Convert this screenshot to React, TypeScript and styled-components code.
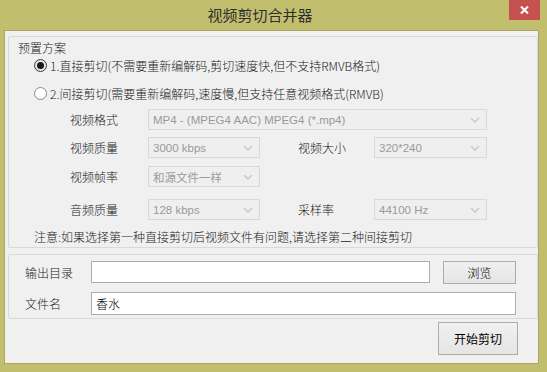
import React from "react";
import styled, { createGlobalStyle } from "styled-components";

const GlobalStyle = createGlobalStyle`
  html, body {
    margin: 0;
    padding: 0;
    background: #c1bf6e;
  }
  body {
    font-family: "Noto Sans", "Noto Sans CJK SC", sans-serif;
    font-size: 12px;
    color: #1a1a1a;
  }
`;

const Frame = styled.div`
  width: 547px;
  height: 372px;
  background: #c1bf6e;
  display: flex;
  flex-direction: column;
`;

const TitleBar = styled.div`
  height: 30px;
  display: flex;
  align-items: flex-start;
`;

const Title = styled.div`
  flex: 1;
  height: 29px;
  padding-left: 11px;
  display: flex;
  align-items: center;
  justify-content: center;
  font-family: "Noto Sans CJK SC", sans-serif;
  font-size: 15px;
  color: #2e2e2e;
`;

const CloseButton = styled.div`
  width: 31px;
  height: 20px;
  margin-right: 7px;
  background: #c75050;
  display: flex;
  align-items: center;
  justify-content: center;
`;

const Client = styled.div`
  box-sizing: border-box;
  width: 535px;
  height: 334px;
  margin-left: 4px;
  background: #f0f0f0;
  border: 1px solid #a9a763;
  padding: 5px 0 0 3px;
  display: flex;
  flex-direction: column;
`;

const GroupBox = styled.div<{ $pb: number; $mt?: number }>`
  box-sizing: border-box;
  width: 530px;
  margin-top: ${(p) => p.$mt ?? 0}px;
  border: 1px solid #d9d9d9;
  border-radius: 2px;
  padding-bottom: ${(p) => p.$pb}px;
  display: flex;
  flex-direction: column;
`;

const Row = styled.div<{ $h: number; $mt?: number; $pl: number }>`
  height: ${(p) => p.$h}px;
  margin-top: ${(p) => p.$mt ?? 0}px;
  padding-left: ${(p) => p.$pl}px;
  display: flex;
  align-items: center;
  font-family: "Noto Sans CJK SC", sans-serif;
  font-weight: 300;
  font-size: 12px;
  white-space: nowrap;
`;

const RadioCircle = styled.span<{ $on?: boolean }>`
  box-sizing: border-box;
  width: 13px;
  height: 13px;
  border-radius: 50%;
  border: 1px solid ${(p) => (p.$on ? "#3c3c3c" : "#8a8a8a")};
  background: ${(p) => (p.$on ? "#e6e6e6" : "#ffffff")};
  display: flex;
  align-items: center;
  justify-content: center;
  margin-right: 3px;
  flex-shrink: 0;

  &::after {
    content: "";
    width: 7px;
    height: 7px;
    border-radius: 50%;
    background: #1a1a1a;
    display: ${(p) => (p.$on ? "block" : "none")};
  }
`;

const Label = styled.span<{ $w: number }>`
  width: ${(p) => p.$w}px;
  flex-shrink: 0;
`;

const Select = styled.div<{ $w: number }>`
  box-sizing: border-box;
  width: ${(p) => p.$w}px;
  height: 21px;
  border: 1px solid #d9d9d9;
  background: #efefef;
  display: flex;
  align-items: center;
  justify-content: space-between;
  padding: 0 6px 0 4px;
  color: #9a9a9a;
  font-family: "Liberation Sans", "Noto Sans CJK SC", sans-serif;
  font-weight: 400;
  font-size: 11.5px;
  flex-shrink: 0;
`;

const Gap = styled.span<{ $w: number }>`
  width: ${(p) => p.$w}px;
  flex-shrink: 0;
`;

const TextBox = styled.div<{ $w: number; $h: number }>`
  box-sizing: border-box;
  width: ${(p) => p.$w}px;
  height: ${(p) => p.$h}px;
  border: 1px solid #abadb3;
  background: #ffffff;
  padding-left: 4px;
  display: flex;
  align-items: center;
  color: #000;
  font-size: 12px;
  flex-shrink: 0;
`;

const Button = styled.div<{ $w: number; $h: number }>`
  box-sizing: border-box;
  width: ${(p) => p.$w}px;
  height: ${(p) => p.$h}px;
  border: 1px solid #acacac;
  background: linear-gradient(#f0f0f0, #e5e5e5);
  display: flex;
  align-items: center;
  justify-content: center;
  font-family: "Noto Sans CJK SC", sans-serif;
  font-size: 12px;
  color: #000;
  flex-shrink: 0;
`;

const Footer = styled.div`
  width: 530px;
  margin-top: 3px;
  display: flex;
  justify-content: flex-end;
  padding-right: 20px;
  box-sizing: border-box;
`;

const Chevron = () => (
  <svg width="10" height="6" viewBox="0 0 10 6">
    <path d="M1 1 L5 5 L9 1" fill="none" stroke="#c6c6c6" strokeWidth="1.3" />
  </svg>
);

const Combo: React.FC<{ w: number; value: string }> = ({ w, value }) => (
  <Select $w={w}>
    <span>{value}</span>
    <Chevron />
  </Select>
);

export default function App() {
  return (
    <>
      <GlobalStyle />
      <Frame>
        <TitleBar>
          <Title>视频剪切合并器</Title>
          <CloseButton>
            <svg width="9" height="8" viewBox="0 0 9 8">
              <path d="M1 0.5 L8 7.5 M8 0.5 L1 7.5" stroke="#ffffff" strokeWidth="2" />
            </svg>
          </CloseButton>
        </TitleBar>
        <Client>
          <GroupBox $pb={3}>
            <Row $h={20} $pl={9}>预置方案</Row>
            <Row $h={16} $pl={25}>
              <RadioCircle $on />
              1.直接剪切(不需要重新编解码,剪切速度快,但不支持RMVB格式)
            </Row>
            <Row $h={16} $mt={12} $pl={25}>
              <RadioCircle />
              2.间接剪切(需要重新编解码,速度慢,但支持任意视频格式(RMVB)
            </Row>
            <Row $h={21} $mt={8} $pl={61}>
              <Label $w={78}>视频格式</Label>
              <Combo w={339} value="MP4 - (MPEG4 AAC) MPEG4 (*.mp4)" />
            </Row>
            <Row $h={21} $mt={7} $pl={61}>
              <Label $w={78}>视频质量</Label>
              <Combo w={112} value="3000 kbps" />
              <Gap $w={38} />
              <Label $w={76}>视频大小</Label>
              <Combo w={113} value="320*240" />
            </Row>
            <Row $h={21} $mt={8} $pl={61}>
              <Label $w={78}>视频帧率</Label>
              <Combo w={112} value="和源文件一样" />
            </Row>
            <Row $h={21} $mt={12} $pl={61}>
              <Label $w={78}>音频质量</Label>
              <Combo w={112} value="128 kbps" />
              <Gap $w={38} />
              <Label $w={76}>采样率</Label>
              <Combo w={113} value="44100 Hz" />
            </Row>
            <Row $h={16} $mt={8} $pl={25}>
              注意:如果选择第一种直接剪切后视频文件有问题,请选择第二种间接剪切
            </Row>
          </GroupBox>
          <GroupBox $pb={3} $mt={6}>
            <Row $h={22} $mt={6} $pl={16}>
              <Label $w={66}>输出目录</Label>
              <TextBox $w={339} $h={22} />
              <Gap $w={13} />
              <Button $w={73} $h={23}>浏览</Button>
            </Row>
            <Row $h={23} $mt={9} $pl={16}>
              <Label $w={66}>文件名</Label>
              <TextBox $w={425} $h={23}>香水</TextBox>
            </Row>
          </GroupBox>
          <Footer>
            <Button $w={80} $h={33}>开始剪切</Button>
          </Footer>
        </Client>
      </Frame>
    </>
  );
}
